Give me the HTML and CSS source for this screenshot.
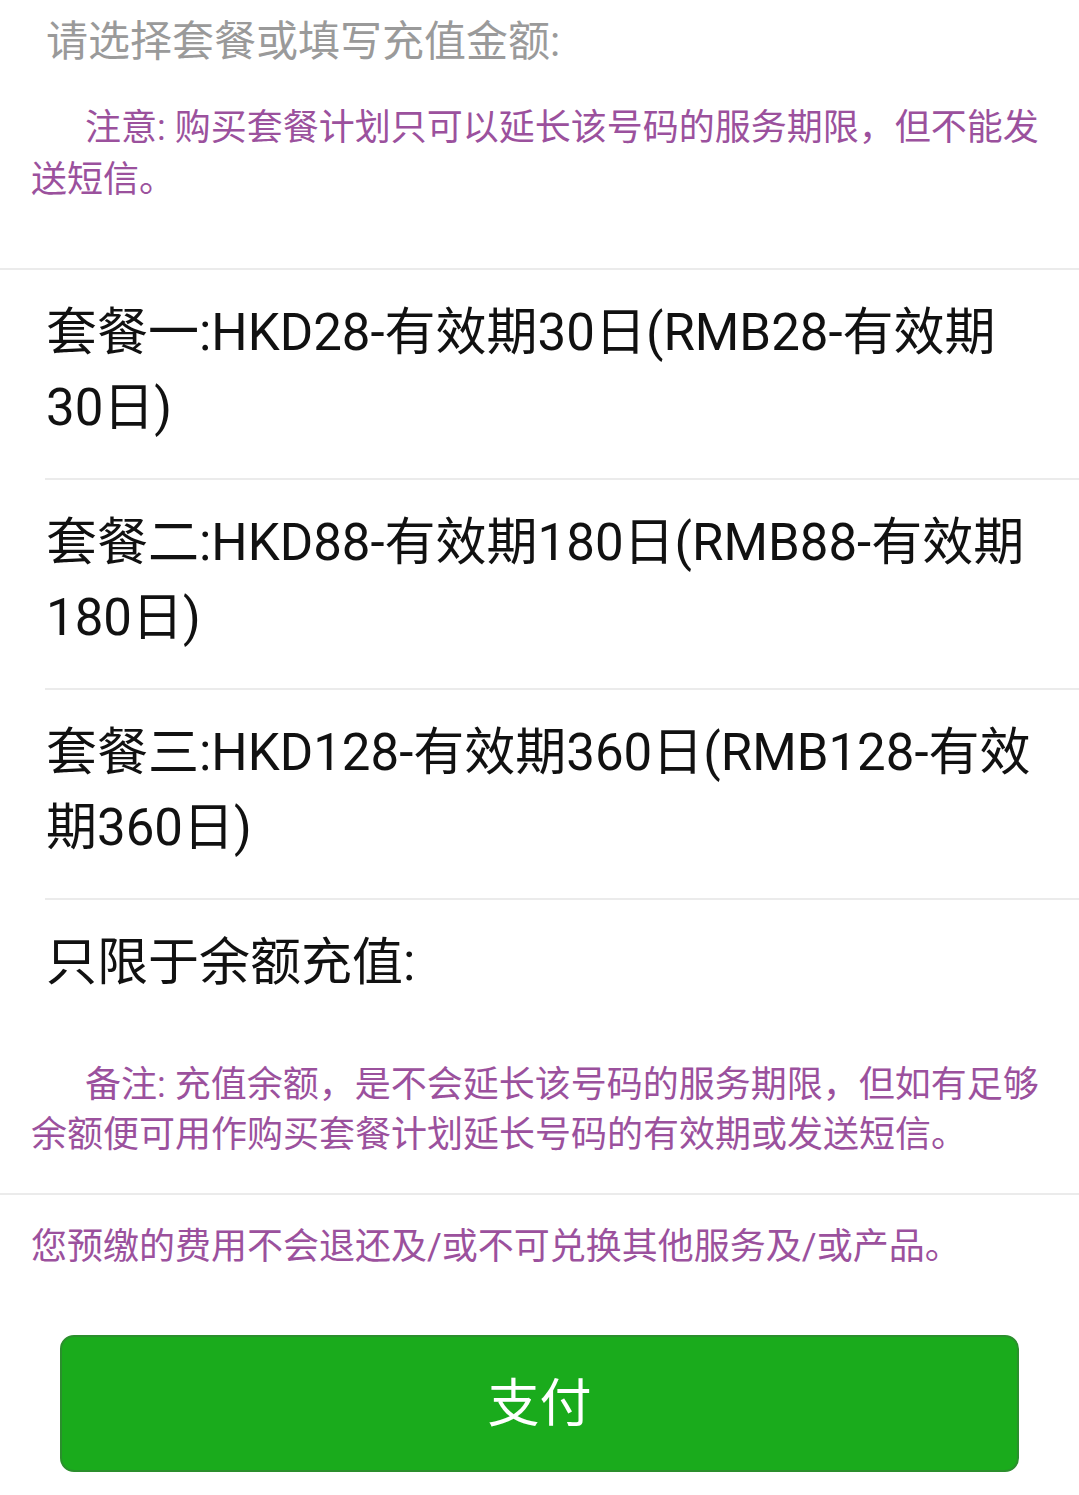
FILE: index.html
```html
<!DOCTYPE html>
<html>
<head>
    <title>充值</title>
    <link rel="stylesheet" href="styles.css">
</head>
<body>
    <div class="page">
        <div class="title">请选择套餐或填写充值金额:</div>

        <p class="notice">注意: 购买套餐计划只可以延长该号码的服务期限，但不能发送短信。</p>

        <ul class="plans">
            <li class="plan">套餐一:HKD28-有效期30日(RMB28-有效期30日)</li>
            <li class="plan">套餐二:HKD88-有效期180日(RMB88-有效期180日)</li>
            <li class="plan">套餐三:HKD128-有效期360日(RMB128-有效期360日)</li>
            <li class="plan plan-last">只限于余额充值:</li>
        </ul>

        <p class="notice notice-balance">备注: 充值余额，是不会延长该号码的服务期限，但如有足够余额便可用作购买套餐计划延长号码的有效期或发送短信。</p>

        <div class="footer">
            <p class="refund">您预缴的费用不会退还及/或不可兑换其他服务及/或产品。</p>
            <button class="pay-button">支付</button>
        </div>
    </div>
</body>
</html>
```

FILE: styles.css
```css
body {
    margin: 0;
    background-color: #fff;
    font-family: Roboto, "Noto Sans CJK SC", sans-serif;
}

.page {
    width: 1079px;
}

.title {
    padding: 12px 46px 0;
    font-size: 42px;
    line-height: 60px;
    color: #9a9a9a;
}

.notice {
    margin: 0;
    padding: 30px 31px 62px;
    font-size: 36px;
    line-height: 52px;
    text-indent: 54px;
    color: #9b519d;
}

.plans {
    list-style: none;
    margin: 0;
    padding: 0;
    border-top: 2px solid #ebebeb;
}

.plan {
    margin-left: 45px;
    padding: 25px 41px 33px 1px;
    font-size: 51px;
    line-height: 75px;
    color: #111;
    border-bottom: 2px solid #ebebeb;
}

.plan-last {
    border-bottom: none;
    padding-bottom: 33px;
}

.notice-balance {
    padding: 27px 31px 33px;
    line-height: 50px;
}

.footer {
    border-top: 2px solid #ebebeb;
    padding: 27px 0 23px;
}

.refund {
    margin: 0 31px;
    font-size: 36px;
    line-height: 50px;
    color: #9b519d;
}

.pay-button {
    display: block;
    width: 959px;
    height: 137px;
    margin: 63px 60px 0;
    padding: 0 0 8px;
    background-color: #1aab1c;
    border: 2px solid #2b8f2d;
    border-radius: 14px;
    color: #fff;
    font-family: Roboto, "Noto Sans CJK SC", sans-serif;
    font-size: 52px;
    cursor: pointer;
}
```
